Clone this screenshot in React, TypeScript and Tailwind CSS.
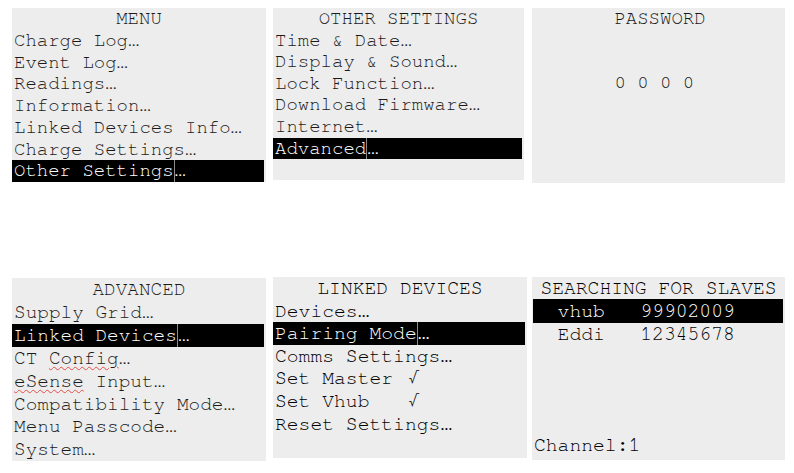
import type { ReactNode } from "react";

const mono =
  "font-['Nimbus_Mono_PS','FreeMono','Courier','Liberation_Mono',monospace] whitespace-pre";

// A menu row; the selected one gets the black bar and the little cursor mark
function Row({
  text,
  tail,
  selected,
}: {
  text: ReactNode;
  tail?: string;
  selected?: boolean;
}) {
  if (!selected) {
    return (
      <div className="pl-[2px]">
        {text}
        {tail}
      </div>
    );
  }
  return (
    <div className="mr-[2px] flex bg-black pl-[2px] text-white">
      <span className="border-r border-[#8a8a8a]">{text}</span>
      <span>{tail}</span>
    </div>
  );
}

function Panel({
  className,
  title,
  children,
}: {
  className: string;
  title: string;
  children?: ReactNode;
}) {
  return (
    <div className={`bg-[#ededed] ${mono} ${className}`}>
      <div className="text-center">{title}</div>
      {children}
    </div>
  );
}

const spell = "underline decoration-wavy decoration-[#e0504a] decoration-1 underline-offset-[2px]";

export default function App() {
  return (
    <div className="min-h-[473px] w-[794px] bg-white pl-[12px] pt-[7px]">
      {/* top row */}
      <div className="flex items-start">
        <Panel
          className="mt-[1px] h-[174px] w-[254px] text-[19px] leading-[21.75px] text-[#1a1a1a]"
          title="MENU"
        >
          <Row text="Charge Log" tail="…" />
          <Row text="Event Log" tail="…" />
          <Row text="Readings" tail="…" />
          <Row text="Information" tail="…" />
          <Row text="Linked Devices Info" tail="…" />
          <Row text="Charge Settings" tail="…" />
          <Row text="Other Settings" tail="…" selected />
        </Panel>

        <Panel
          className="mt-[1px] ml-[7px] h-[172px] w-[251px] text-[19px] leading-[21.6px] text-[#1a1a1a]"
          title="OTHER SETTINGS"
        >
          <Row text="Time & Date" tail="…" />
          <Row text="Display & Sound" tail="…" />
          <Row text="Lock Function" tail="…" />
          <Row text="Download Firmware" tail="…" />
          <Row text="Internet" tail="…" />
          <Row text="Advanced" tail="…" selected />
        </Panel>

        <div
          className={`mt-[1px] ml-[8px] flex h-[175px] w-[253px] justify-center bg-[#ededed] pl-[3px] text-[19px] leading-[21.5px] text-[#1a1a1a] ${mono}`}
        >
          <div>
            <div>PASSWORD</div>
            <div className="mt-[42px]">0 0 0 0</div>
          </div>
        </div>
      </div>

      {/* bottom row */}
      <div className="mt-[94px] flex items-start">
        <Panel
          className="mt-[1px] h-[183px] w-[254px] text-[19.4px] leading-[22.9px] text-[#1a1a1a]"
          title="ADVANCED"
        >
          <Row text="Supply Grid" tail="…" />
          <Row text="Linked Devices" tail="…" selected />
          <Row
            text={
              <>
                CT <span className={spell}>Config</span>
              </>
            }
            tail="…"
          />
          <Row
            text={
              <>
                <span className={spell}>eSense</span> Input
              </>
            }
            tail="…"
          />
          <Row text="Compatibility Mode" tail="…" />
          <Row text="Menu Passcode" tail="…" />
          <Row text="System" tail="…" />
        </Panel>

        <Panel
          className="ml-[7px] h-[181px] w-[254px] text-[19.7px] leading-[22.6px] text-black"
          title="LINKED DEVICES"
        >
          <Row text="Devices" tail="…" />
          <Row text="Pairing Mode" tail="…" selected />
          <Row text="Comms Settings" tail="…" />
          <Row text="Set Master √" />
          <Row text="Set Vhub   √" />
          <Row text="Reset Settings" tail="…" />
        </Panel>

        <div
          className={`ml-[5px] flex h-[183px] w-[253px] flex-col bg-[#ededed] text-[19.7px] leading-[22.7px] text-black ${mono}`}
        >
          <div className="text-center">SEARCHING FOR SLAVES</div>
          <div className="mr-[2px] ml-[1px] mt-[-1px] h-[24px] bg-black pl-[1px] leading-[24px] text-white">
            {"  vhub   99902009"}
          </div>
          <div className="pl-[2px]">{"  Eddi   12345678"}</div>
          <div className="mt-auto mb-[3px] pl-[2px]">Channel:1</div>
        </div>
      </div>
    </div>
  );
}
